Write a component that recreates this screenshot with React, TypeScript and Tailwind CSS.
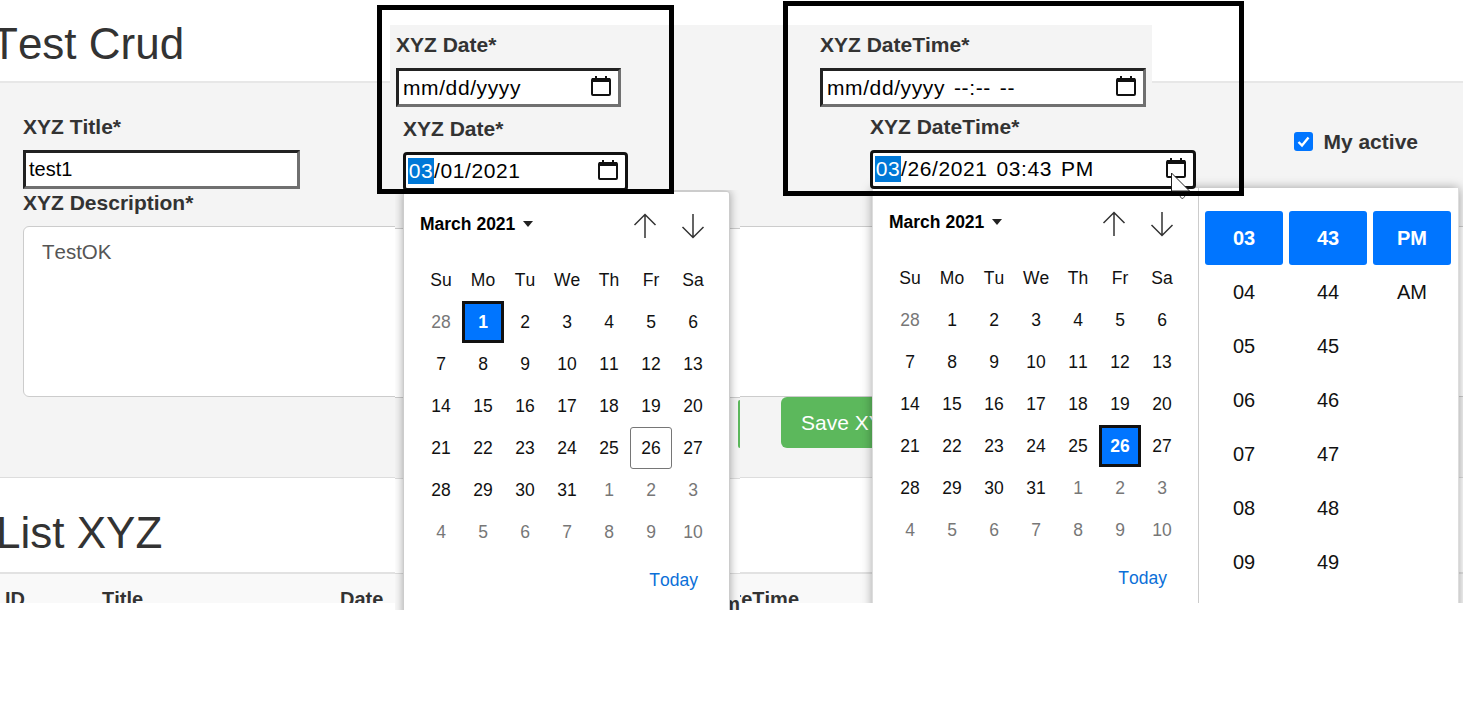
import React from 'react';

const WEEK = ['Su', 'Mo', 'Tu', 'We', 'Th', 'Fr', 'Sa'];
const HOURS = ['04', '05', '06', '07', '08', '09'];
const MINUTES = ['44', '45', '46', '47', '48', '49'];

// 42 cells of the March 2021 grid, with the days of other months greyed
const DAYS = [
  { d: 28, off: true },
  ...Array.from({ length: 31 }, (_, i) => ({ d: i + 1, off: false })),
  ...Array.from({ length: 10 }, (_, i) => ({ d: i + 1, off: true })),
];

const CalendarIcon = () => (
  <svg width="22" height="22" viewBox="0 0 22 22" className="mb-1 shrink-0">
    <rect x="2" y="4" width="18" height="16" rx="1" fill="none" stroke="#111" strokeWidth="2" />
    <rect x="2" y="3" width="18" height="4" fill="#111" />
    <rect x="5" y="1" width="2" height="3" fill="#111" />
    <rect x="15" y="1" width="2" height="3" fill="#111" />
  </svg>
);

const Arrow = ({ down }: { down?: boolean }) => (
  <svg width="24" height="26" viewBox="0 0 24 26" className={down ? 'rotate-180' : ''}>
    <path d="M12 1.5V25M1.5 12L12 1.5L22.5 12" fill="none" stroke="#333" strokeWidth="1.5" />
  </svg>
);

const IdleInput = ({ width, children }: { width: string; children: React.ReactNode }) => (
  <div
    className={`${width} flex h-[39px] shrink-0 items-center justify-between border-[3px] border-t-[#222] border-r-[#707070] border-b-[#707070] border-l-[#222] bg-white pr-[6px] pl-1 text-[21px] tracking-[0.6px] text-black`}
  >
    <div className="flex items-center">{children}</div>
    <CalendarIcon />
  </div>
);

const FocusInput = ({ width, children }: { width: string; children: React.ReactNode }) => (
  <div
    className={`${width} flex h-[39px] shrink-0 items-center justify-between rounded-[4px] border-[3px] border-[#111] bg-white pr-[6px] pl-[2px] text-[21px] tracking-[0.6px] text-black`}
  >
    <div className="flex items-center pb-[1px]">
      <span className="flex h-[26px] w-[26px] items-center justify-center bg-[#0078d7] text-white">03</span>
      {children}
    </div>
    <CalendarIcon />
  </div>
);

const Calendar = ({ picked, boxed, topPad }: { picked: number; boxed?: number; topPad: string }) => (
  <div className={`w-[325px] shrink-0 ${topPad}`}>
    <div className="flex h-[64px] items-center justify-between pr-[24px] pl-4">
      <div className="flex items-center gap-2 text-[17.5px] font-bold text-black">
        March 2021
        <span className="h-0 w-0 border-x-[5px] border-t-[6px] border-x-transparent border-t-[#222]" />
      </div>
      <div className="mt-1 flex gap-6">
        <Arrow />
        <Arrow down />
      </div>
    </div>
    <div className="mt-[3px] grid grid-cols-[repeat(7,42px)] pl-4 text-[17.5px] text-[#111]">
      {WEEK.map((w) => (
        <div key={w} className="flex h-[42px] items-center justify-center">
          {w}
        </div>
      ))}
      {DAYS.map((c, i) => {
        const on = !c.off && c.d === picked;
        const box = !c.off && c.d === boxed;
        return (
          <div
            key={i}
            className={`flex h-[42px] items-center justify-center ${c.off ? 'text-[#777]' : ''} ${
              on ? 'border-[3px] border-[#111] bg-[#0075ff] font-bold text-white' : ''
            } ${box ? 'rounded-[3px] border border-[#767676]' : ''}`}
          >
            {c.d}
          </div>
        );
      })}
    </div>
    <div className="mt-[15px] pr-[31px] text-right text-[17.5px] leading-6 text-[#0b6fd8]">Today</div>
  </div>
);

const TimeColumn = ({ head, rows }: { head: string; rows: string[] }) => (
  <div className="w-[78px]">
    <div className="flex h-[54px] items-center justify-center rounded-[3px] bg-[#0075ff] font-bold text-white">{head}</div>
    {rows.map((r) => (
      <div key={r} className="flex h-[54px] items-center justify-center text-[#111]">
        {r}
      </div>
    ))}
  </div>
);

export default function App() {
  return (
    <div className="relative h-[728px] w-full overflow-hidden bg-white font-['Liberation_Sans',Arial,sans-serif] text-[#333] [font-kerning:none]">
      {/* page underneath */}
      <div className="h-[603px] w-[1463px] overflow-hidden">
        <div className="flex h-[83px] items-center border-b-2 border-[#e7e7e7] pt-[6px]">
          <h1 className="-ml-[9px] text-[44px] leading-none">Test Crud</h1>
        </div>

        <div className="h-[395px] overflow-hidden border-b border-[#ddd] bg-[#f4f4f4] pt-8 pl-[23px]">
          <div className="flex items-start justify-between pr-[45px]">
            <div className="w-[277px]">
              <div className="text-[21px] leading-6 font-bold">XYZ Title*</div>
              <div className="mt-[11px] flex h-[39px] items-center border-[3px] border-t-[#222] border-r-[#707070] border-b-[#707070] border-l-[#222] bg-white pb-[2px] pl-[3px] text-[20px] text-black">
                test1
              </div>
              <div className="mt-[2px] whitespace-nowrap text-[21px] leading-6 font-bold">XYZ Description*</div>
            </div>
            <label className="mt-[11px] flex items-center gap-[10px] text-[21px] font-bold">
              <span className="flex h-[19px] w-[19px] items-center justify-center rounded-[3px] bg-[#0075ff]">
                <svg width="15" height="15" viewBox="0 0 15 15">
                  <path d="M2.5 8L6 11.5L12.5 3.5" fill="none" stroke="#fff" strokeWidth="2.4" />
                </svg>
              </span>
              My active
            </label>
          </div>
          <div className="mt-[11px] h-[171px] w-[1480px] rounded-[6px] border border-[#ccc] bg-white px-[18px] py-[10px] text-[20.5px] text-[#555]">
            TestOK
          </div>
          <div className="pl-[758px]">
            <button className="h-[51px] w-[200px] rounded-[6px] bg-[#5cb85c] pl-5 text-left text-[21px] text-white">Save XYZ</button>
          </div>
        </div>

        <div className="flex h-[94px] items-center pt-[16px]">
          <h2 className="-ml-[4px] text-[44px] leading-none">List XYZ</h2>
        </div>
        <div className="flex h-[32px] border-t-2 border-[#e2e2e2] bg-[#f9f9f9] pt-[13px] text-[20px] leading-6 font-bold whitespace-nowrap">
          <div className="w-[102px] pl-[5px]">ID</div>
          <div className="w-[238px]">Title</div>
          <div className="w-[369px]">Date</div>
          <div>DateTime</div>
        </div>
      </div>

      {/* grey band pasted over the header */}
      <div className="absolute top-[25px] left-[390px] h-[58px] w-[762px] bg-[#f4f4f4]" />

      {/* first date picker, with the piece of page it was cut out with */}
      <div className="absolute top-[190px] left-[395px] h-[420px] w-[345px] overflow-hidden">
        <div className="h-[38px] bg-[#f4f4f4]" />
        <div className="h-[170px] border-y border-[#ccc] bg-white" />
        <div className="relative h-[81px] border-b border-[#ddd] bg-[#f4f4f4]">
          <span className="absolute top-[2px] right-0 h-[48px] w-[2px] rounded-l bg-[#5cb85c]" />
        </div>
        <div className="h-[95px] border-b border-[#ddd] bg-white" />
        <div className="relative h-[36px] bg-[#f9f9f9]">
          <span className="absolute top-[18px] right-0 text-[20px] leading-6 font-bold">m</span>
        </div>
        <div className="absolute top-[1px] left-[8px] h-[430px] rounded-[3px] border border-[#ccc] bg-white shadow-[0_0_10px_rgba(0,0,0,0.35)]">
          <Calendar picked={1} boxed={26} topPad="pt-0" />
        </div>
      </div>

      {/* second picker with its time columns, cut off where the page ends */}
      <div className="absolute top-[170px] left-[850px] h-[433px] w-[613px] overflow-hidden">
        <div className="absolute top-[18px] left-[22px] flex h-[440px] w-[587px] border-x border-[#ddd] bg-white shadow-[0_0_10px_rgba(0,0,0,0.35)]">
          <Calendar picked={26} topPad="pt-[2px]" />
          <div className="flex flex-1 gap-[6px] border-l border-[#ccc] pt-[23px] pl-[6px] text-[20px]">
            <TimeColumn head="03" rows={HOURS} />
            <TimeColumn head="43" rows={MINUTES} />
            <TimeColumn head="PM" rows={['AM']} />
          </div>
        </div>
      </div>

      {/* hand-drawn highlight boxes */}
      <div className="absolute top-[5px] left-[377px] h-[189px] w-[297px] overflow-hidden border-[5px] border-black">
        <div className="flex flex-col items-start pl-[14px]">
          <div className="mt-[23px] text-[21px] leading-6 font-bold">XYZ Date*</div>
          <div className="mt-[11px]">
            <IdleInput width="w-[225px]">mm/dd/yyyy</IdleInput>
          </div>
          <div className="mt-[10px] ml-[7px] text-[21px] leading-6 font-bold">XYZ Date*</div>
          <div className="mt-[11px] ml-[7px]">
            <FocusInput width="w-[225px]">/01/2021</FocusInput>
          </div>
        </div>
      </div>

      <div className="absolute top-[1px] left-[783px] h-[195px] w-[461px] overflow-hidden border-[5px] border-black">
        <div className="flex flex-col items-start pl-[32px]">
          <div className="mt-[27px] text-[21px] leading-6 font-bold">XYZ DateTime*</div>
          <div className="mt-[11px]">
            <IdleInput width="w-[326px]">
              mm/dd/yyyy
              <span className="ml-[9px]">--:--</span>
              <span className="ml-[9px]">--</span>
            </IdleInput>
          </div>
          <div className="mt-2 ml-[50px] text-[21px] leading-6 font-bold">XYZ DateTime*</div>
          <div className="mt-[11px] ml-[50px]">
            <FocusInput width="w-[326px]">
              /26/2021
              <span className="ml-[9px]">03:43</span>
              <span className="ml-[9px]">PM</span>
            </FocusInput>
          </div>
        </div>
      </div>

      {/* mouse pointer: the black box hides its middle, the tail shows below */}
      <svg width="24" height="28" viewBox="0 0 24 28" className="absolute top-[172px] left-[1170px]">
        <path d="M1.5 1V19H19.5Z" fill="#fff" stroke="#222" strokeWidth="1" />
        <path d="M10 24Q11 27 13 26.5L15 24" fill="#fff" stroke="#555" strokeWidth="1" />
      </svg>
    </div>
  );
}
